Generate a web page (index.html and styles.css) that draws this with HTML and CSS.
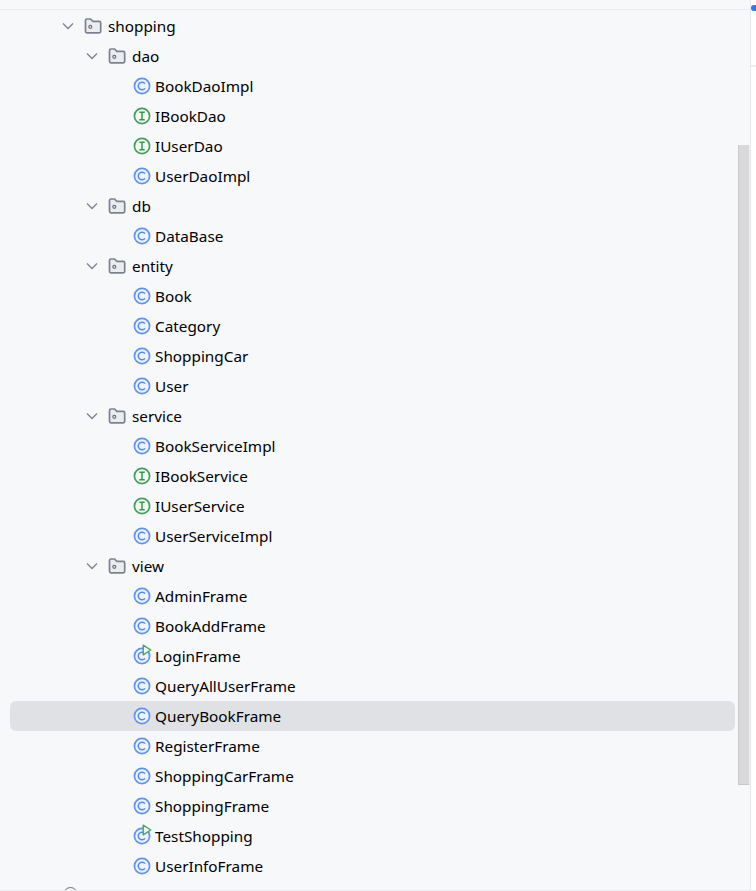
FILE: index.html
```html
<!DOCTYPE html>
<html lang="en">
<head>
<meta charset="utf-8">
<title>Project tree</title>
<link rel="stylesheet" href="styles.css">
</head>
<body>
<svg class="defs" width="0" height="0" aria-hidden="true">
  <symbol id="chev" viewBox="0 0 16 16"><path d="M3 5.5 8 10.5 13 5.5" fill="none" stroke="#7f828e" stroke-width="1.3"/></symbol>
  <symbol id="pkg" viewBox="0 0 18 18"><path d="M1.5 3.5A1.5 1.5 0 0 1 3 2h3.6l2.2 2.4H15.2a1.5 1.5 0 0 1 1.5 1.5v8.4a1.5 1.5 0 0 1-1.5 1.5H3a1.5 1.5 0 0 1-1.5-1.5z" fill="#ebecf0" stroke="#7d818e" stroke-width="1.7"/><circle cx="6.3" cy="9.8" r="1.5" fill="none" stroke="#6c707e" stroke-width="1.2"/></symbol>
  <symbol id="cls" viewBox="0 0 18 18"><circle cx="9" cy="9" r="7.6" fill="#edf3ff" stroke="#5f92f7" stroke-width="1.7"/><path d="M12 6.6A3.8 3.8 0 1 0 12 11.4" fill="none" stroke="#548af7" stroke-width="1.5"/></symbol>
  <symbol id="ifc" viewBox="0 0 18 18"><circle cx="9" cy="9" r="7.6" fill="#f2fcf3" stroke="#429e5b" stroke-width="1.7"/><path d="M6.3 5.3h5.4M9 5.3v7.4M6.3 12.7h5.4" fill="none" stroke="#369650" stroke-width="1.5"/></symbol>
  <symbol id="run" viewBox="0 0 10 12"><path d="M1.2 1.2 8.8 6 1.2 10.8z" fill="#f2fcf3" stroke="#45a560" stroke-width="1.4" stroke-linejoin="round"/></symbol>
</svg>
<div class="window">
  <aside class="panel">
    <div class="tree">
      <div class="row d0"><svg class="chev"><use href="#chev"/></svg><svg class="ico"><use href="#pkg"/></svg><span>shopping</span></div>
      <div class="row d1"><svg class="chev"><use href="#chev"/></svg><svg class="ico"><use href="#pkg"/></svg><span>dao</span></div>
      <div class="row d2"><svg class="ico"><use href="#cls"/></svg><span>BookDaoImpl</span></div>
      <div class="row d2"><svg class="ico"><use href="#ifc"/></svg><span>IBookDao</span></div>
      <div class="row d2"><svg class="ico"><use href="#ifc"/></svg><span>IUserDao</span></div>
      <div class="row d2"><svg class="ico"><use href="#cls"/></svg><span>UserDaoImpl</span></div>
      <div class="row d1"><svg class="chev"><use href="#chev"/></svg><svg class="ico"><use href="#pkg"/></svg><span>db</span></div>
      <div class="row d2"><svg class="ico"><use href="#cls"/></svg><span>DataBase</span></div>
      <div class="row d1"><svg class="chev"><use href="#chev"/></svg><svg class="ico"><use href="#pkg"/></svg><span>entity</span></div>
      <div class="row d2"><svg class="ico"><use href="#cls"/></svg><span>Book</span></div>
      <div class="row d2"><svg class="ico"><use href="#cls"/></svg><span>Category</span></div>
      <div class="row d2"><svg class="ico"><use href="#cls"/></svg><span>ShoppingCar</span></div>
      <div class="row d2"><svg class="ico"><use href="#cls"/></svg><span>User</span></div>
      <div class="row d1"><svg class="chev"><use href="#chev"/></svg><svg class="ico"><use href="#pkg"/></svg><span>service</span></div>
      <div class="row d2"><svg class="ico"><use href="#cls"/></svg><span>BookServiceImpl</span></div>
      <div class="row d2"><svg class="ico"><use href="#ifc"/></svg><span>IBookService</span></div>
      <div class="row d2"><svg class="ico"><use href="#ifc"/></svg><span>IUserService</span></div>
      <div class="row d2"><svg class="ico"><use href="#cls"/></svg><span>UserServiceImpl</span></div>
      <div class="row d1"><svg class="chev"><use href="#chev"/></svg><svg class="ico"><use href="#pkg"/></svg><span>view</span></div>
      <div class="row d2"><svg class="ico"><use href="#cls"/></svg><span>AdminFrame</span></div>
      <div class="row d2"><svg class="ico"><use href="#cls"/></svg><span>BookAddFrame</span></div>
      <div class="row d2"><span class="stack"><svg class="ico"><use href="#cls"/></svg><svg class="run"><use href="#run"/></svg></span><span>LoginFrame</span></div>
      <div class="row d2"><svg class="ico"><use href="#cls"/></svg><span>QueryAllUserFrame</span></div>
      <div class="row d2 selected"><svg class="ico"><use href="#cls"/></svg><span>QueryBookFrame</span></div>
      <div class="row d2"><svg class="ico"><use href="#cls"/></svg><span>RegisterFrame</span></div>
      <div class="row d2"><svg class="ico"><use href="#cls"/></svg><span>ShoppingCarFrame</span></div>
      <div class="row d2"><svg class="ico"><use href="#cls"/></svg><span>ShoppingFrame</span></div>
      <div class="row d2"><span class="stack"><svg class="ico"><use href="#cls"/></svg><svg class="run"><use href="#run"/></svg></span><span>TestShopping</span></div>
      <div class="row d2"><svg class="ico"><use href="#cls"/></svg><span>UserInfoFrame</span></div>
      <div class="row next"><span class="ring"></span></div>
    </div>
    <div class="scrollbar"></div>
  </aside>
  <div class="edge"><span class="dot"></span><span class="tick"></span></div>
</div>
</body>
</html>
```
FILE: styles.css
```css
html, body {
  margin: 0;
  padding: 0;
  height: 100%;
  overflow: hidden;
  background: #ffffff;
}
.defs { position: absolute; }
.window {
  display: flex;
  box-sizing: border-box;
  height: 891px;
  border-bottom: 1px solid #ebecf0;
}
.panel {
  position: relative;
  box-sizing: border-box;
  width: 751px;
  height: 890px;
  padding-top: 9px;
  background: #f7f8fa;
  border-right: 1px solid #e6e7ec;
  overflow: hidden;
}
.tree {
  height: 100%;
  padding: 1px 15px 0 10px;
  border-top: 1px solid #ebecf0;
  font-family: "Noto Sans", sans-serif;
  font-size: 15.3px;
  color: #000000;
}
.row {
  display: flex;
  align-items: center;
  height: 30px;
  border-radius: 6px;
  white-space: nowrap;
}
.row.selected { background: #dfe1e5; }
.d0 { padding-left: 50px; }
.d1 { padding-left: 74px; }
.d2 { padding-left: 123px; }
.chev {
  width: 16px;
  height: 16px;
  margin-right: 8px;
}
.chev + .ico { margin-right: 6px; }
.ico {
  display: block;
  width: 18px;
  height: 18px;
  margin-right: 4px;
}
.stack {
  position: relative;
  display: block;
}
.run {
  position: absolute;
  left: 9px;
  top: -3px;
  width: 10px;
  height: 12px;
}
.next { padding-left: 53px; }
.ring {
  display: block;
  width: 15px;
  height: 15px;
  margin-top: -3px;
  box-sizing: border-box;
  border: 1.5px solid #6c707e;
  border-radius: 50%;
}
.scrollbar {
  position: absolute;
  right: 0;
  top: 145px;
  width: 12px;
  height: 640px;
  box-sizing: border-box;
  background: #d9d9d9;
  border-left: 1px solid #c9c9c9;
  border-right: 1px solid #f0f0f0;
  border-bottom: 1px solid #c9c9c9;
}
.edge {
  position: relative;
  flex: 1;
}
.dot {
  position: absolute;
  left: 0;
  top: 5px;
  width: 5px;
  height: 6px;
  border-radius: 3px 0 0 3px;
  background: #3574f0;
}
.tick {
  position: absolute;
  left: 0;
  right: 0;
  top: 65px;
  height: 2px;
  background: #ededed;
}
```
